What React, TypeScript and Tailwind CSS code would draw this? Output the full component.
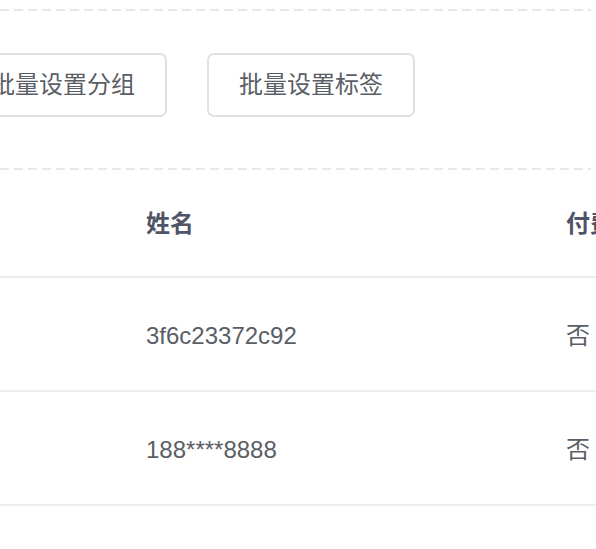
const FONT = "font-['Liberation_Sans','Noto_Sans_CJK_SC',sans-serif]"

const rows = [
  { name: '3f6c23372c92', paid: '否' },
  { name: '188****8888', paid: '否' },
]

function Dashed() {
  return (
    <div className="h-[2px] w-[591px] bg-[repeating-linear-gradient(90deg,#e6e8eb_0_9px,transparent_9px_14px)]" />
  )
}

function Button({ children }: { children: string }) {
  return (
    <button className="h-[64px] w-[208px] shrink-0 rounded-[7px] border-2 border-[#dfe1e5] bg-white text-[24px] leading-none text-[#5a5e66]">
      {children}
    </button>
  )
}

export default function App() {
  return (
    <div className={`${FONT} h-[549px] w-[596px] overflow-hidden bg-white`}>
      <div className="pt-[9px]">
        <Dashed />
      </div>

      <div className="ml-[-41px] mt-[42px] flex gap-[40px]">
        <Button>批量设置分组</Button>
        <Button>批量设置标签</Button>
      </div>

      <div className="mt-[51px]">
        <Dashed />
      </div>

      <div className="w-[596px]">
        <div className="flex h-[108px] items-center border-b-2 border-[#ebedf0] pt-[2px] text-[24px] font-bold text-[#4f5566]">
          <div className="w-[146px] shrink-0" />
          <div className="w-[420px] shrink-0">姓名</div>
          <div className="shrink-0 whitespace-nowrap">付费会员</div>
        </div>
        {rows.map((r) => (
          <div
            key={r.name}
            className="flex h-[114px] items-center border-b-2 border-[#ebedf0] pt-[4px] text-[24px] text-[#5a5e66]"
          >
            <div className="w-[146px] shrink-0" />
            <div className="w-[420px] shrink-0">{r.name}</div>
            <div className="shrink-0">{r.paid}</div>
          </div>
        ))}
      </div>
    </div>
  )
}
